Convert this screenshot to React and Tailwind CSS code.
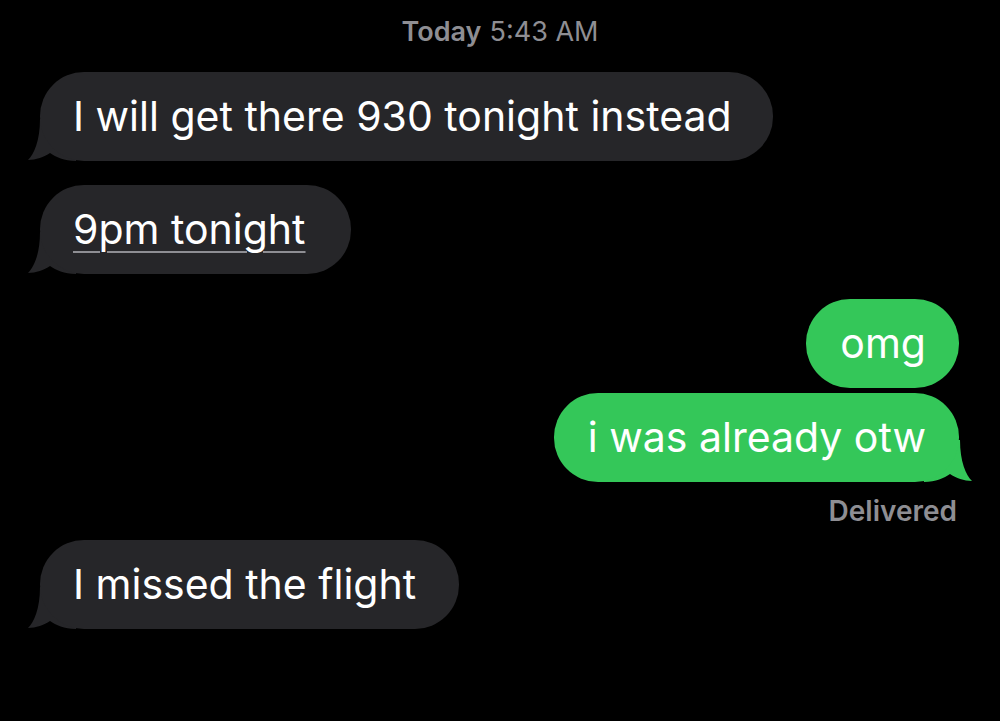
import React from "react";

const GRAY = "#262629";
const GREEN = "#34c759";

function LeftTail({ color }) {
  return (
    <svg className="absolute left-[-12px] bottom-0" width="50" height="42" viewBox="0 0 50 42">
      <path d="M12 0 C12 22 6 35 0 41 C8 41 16 38 22 34 C28 38 36 42 48 42 L48 0 Z" fill={color} />
    </svg>
  );
}

function RightTail({ color }) {
  return (
    <svg className="absolute right-[-13px] bottom-0" width="50" height="42" viewBox="0 0 50 42">
      <path d="M38 0 C38 22 44 35 50 41 C42 41 34 38 28 34 C22 38 14 42 2 42 L2 0 Z" fill={color} />
    </svg>
  );
}

function In({ children, tail = true, pr = "pr-[40px]" }) {
  return (
    <div className="relative self-start ml-[40px]">
      {tail && <LeftTail color={GRAY} />}
      <div className={"relative h-[89px] rounded-[44px] bg-[#262629] pl-[33px] flex items-center text-white text-[41px] leading-none whitespace-nowrap " + pr}>
        {children}
      </div>
    </div>
  );
}

function Out({ children, tail = false }) {
  return (
    <div className="relative self-end mr-[41px]">
      {tail && <RightTail color={GREEN} />}
      <div className="relative h-[89px] rounded-[44px] bg-[#34c759] pl-[34px] pr-[33px] flex items-center text-white text-[41px] leading-none whitespace-nowrap">
        {children}
      </div>
    </div>
  );
}

export default function App() {
  return (
    <div
      className="w-[1000px] h-[721px] bg-black flex flex-col overflow-hidden"
      style={{ fontFamily: "Inter, 'Noto Sans', sans-serif" }}
    >
      <div className="mt-[17px] h-[30px] flex justify-center items-center text-[27px] text-[#8e8e93]">
        <span className="font-semibold">Today</span>
        <span className="ml-[8px]">5:43 AM</span>
      </div>
      <div className="mt-[25px] flex flex-col">
        <In pr="pr-[41px]">I will get there 930 tonight instead</In>
        <div className="h-[24px]" />
        <In pr="pr-[45px]">
          <span className="underline decoration-[#8e8e93] decoration-2 underline-offset-[7px]">9pm tonight</span>
        </In>
        <div className="h-[25px]" />
        <Out>omg</Out>
        <div className="h-[5px]" />
        <Out tail>i was already otw</Out>
        <div className="self-end mr-[43px] mt-[14px] h-[30px] text-[28px] font-semibold text-[#8e8e93] leading-[30px]">Delivered</div>
        <div className="h-[14px]" />
        <In pr="pr-[43px]">I missed the flight</In>
      </div>
    </div>
  );
}
